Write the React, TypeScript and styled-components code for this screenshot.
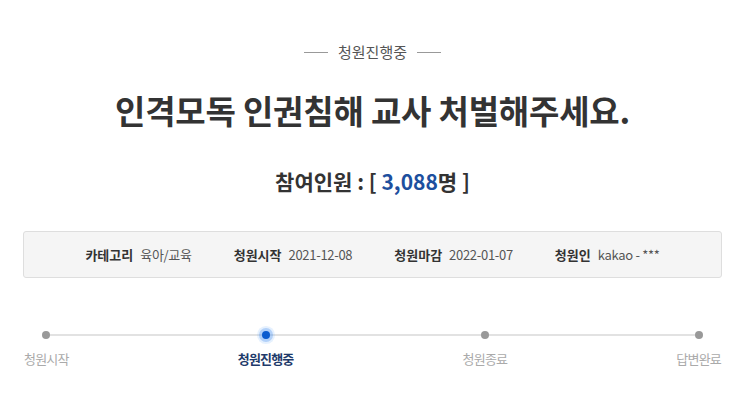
import React from 'react';
import styled, { createGlobalStyle, css } from 'styled-components';

const GlobalStyle = createGlobalStyle`
  html, body { margin: 0; padding: 0; background: #fff; }
  body { font-family: "Noto Sans CJK KR", "Noto Sans", sans-serif; }
`;

interface IInfo {
  label: string;
  value: string;
}

const infos: IInfo[] = [
  { label: '카테고리', value: '육아/교육' },
  { label: '청원시작', value: '2021-12-08' },
  { label: '청원마감', value: '2022-01-07' },
  { label: '청원인', value: 'kakao - ***' },
];

const steps = ['청원시작', '청원진행중', '청원종료', '답변완료'];
const current = 1;

function App() {
  return (
    <Page>
      <GlobalStyle />
      <Status>청원진행중</Status>
      <Title>인격모독 인권침해 교사 처벌해주세요.</Title>
      <Count>
        참여인원 : [ <Num>3,088</Num>명 ]
      </Count>
      <InfoBox>
        {infos.map((i) => (
          <InfoItem key={i.label}>
            <InfoLabel>{i.label}</InfoLabel>
            <InfoValue>{i.value}</InfoValue>
          </InfoItem>
        ))}
      </InfoBox>
      <Steps>
        {steps.map((s, idx) => (
          <Step key={s}>
            <Dot active={idx === current} />
            <StepLabel active={idx === current}>{s}</StepLabel>
          </Step>
        ))}
      </Steps>
    </Page>
  );
}

const Page = styled.div`
  width: 745px;
  padding-top: 40px;
  display: flex;
  flex-direction: column;
  align-items: center;
`;

const Status = styled.div`
  display: flex;
  align-items: center;
  gap: 10px;
  font-size: 15px;
  line-height: 24px;
  color: #555;
  &::before,
  &::after {
    content: '';
    width: 24px;
    height: 1px;
    background: #999;
  }
`;

const Title = styled.h1`
  margin: 24px 0 0;
  font-size: 33px;
  line-height: 44px;
  font-weight: 700;
  color: #333;
  letter-spacing: -0.2px;
`;

const Count = styled.div`
  margin-top: 35px;
  font-size: 21px;
  line-height: 28px;
  font-weight: 700;
  color: #333;
`;

const Num = styled.span`
  color: #1d4f9e;
`;

const InfoBox = styled.div`
  box-sizing: border-box;
  margin-top: 36px;
  width: 699px;
  height: 47px;
  background: #f5f5f5;
  border: 1px solid #dedede;
  border-radius: 3px;
  display: flex;
  align-items: center;
  justify-content: center;
  gap: 42px;
`;

const InfoItem = styled.div`
  display: flex;
  align-items: center;
  gap: 7px;
  font-size: 13px;
`;

const InfoLabel = styled.span`
  font-weight: 700;
  color: #333;
`;

const InfoValue = styled.span`
  color: #555;
  letter-spacing: -0.3px;
`;

const Steps = styled.div`
  position: relative;
  box-sizing: border-box;
  margin-top: 46px;
  width: 697px;
  display: flex;
  justify-content: space-between;
  &::before {
    content: '';
    position: absolute;
    left: 22px;
    right: 22px;
    top: 10px;
    height: 2px;
    background: #e2e2e2;
  }
`;

const Step = styled.div`
  position: relative;
  display: flex;
  flex-direction: column;
  align-items: center;
`;

const Dot = styled.span<{ active?: boolean }>`
  box-sizing: border-box;
  width: 8px;
  height: 8px;
  margin: 7px 0;
  border-radius: 50%;
  background: #999;
  ${(p) =>
    p.active &&
    css`
      background: #0b5ccf;
      box-shadow: 0 0 0 3px rgba(80, 150, 240, 0.35), 0 0 0 5px rgba(130, 185, 250, 0.2);
    `}
`;

const StepLabel = styled.span<{ active?: boolean }>`
  margin-top: 4px;
  font-size: 13px;
  line-height: 18px;
  letter-spacing: -0.8px;
  color: ${(p) => (p.active ? '#1f3b6b' : '#aaa')};
  font-weight: ${(p) => (p.active ? 700 : 400)};
`;

export default App;
